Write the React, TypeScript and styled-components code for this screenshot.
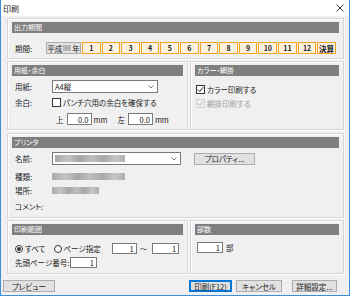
import styled, { createGlobalStyle } from "styled-components";

const GlobalStyle = createGlobalStyle`
  html, body { margin: 0; padding: 0; }
  body {
    font-family: "Noto Sans CJK JP", "Noto Sans", sans-serif;
    font-size: 7.5px;
    color: #1a1a1a;
  }
  * { box-sizing: border-box; }
`;

const Window = styled.div`
  width: 350px;
  height: 296px;
  border: 1px solid #3b8edb;
  border-top: none;
  background: #f0f0f0;
  display: flex;
  flex-direction: column;
  overflow: hidden;
  font-feature-settings: "palt";
`;

const TitleBar = styled.div`
  height: 16px;
  background: #fff;
  display: flex;
  align-items: center;
  justify-content: space-between;
  padding: 0 5px 0 2px;
  font-size: 8px;
`;

const Body = styled.div`
  padding: 2px 5px 0 6px;
  display: flex;
  flex-direction: column;
`;

const Group = styled.div<{ $h: number; $mb?: number; $flex?: boolean }>`
  height: ${(p) => p.$h}px;
  margin-bottom: ${(p) => p.$mb ?? 0}px;
  border: 1px solid #d5d5d5;
  box-shadow: inset 1px 1px 0 #fff, 1px 1px 0 #fff;
  padding: 3px 4px;
  display: flex;
  flex-direction: column;
  ${(p) => (p.$flex ? "flex: 1;" : "")}
`;

const GroupRow = styled.div<{ $h: number; $mb?: number }>`
  display: flex;
  gap: 2px;
  height: ${(p) => p.$h}px;
  margin-bottom: ${(p) => p.$mb ?? 0}px;
  & > div:first-child {
    width: 181px;
    flex: none;
  }
`;

const Header = styled.div`
  height: 11px;
  background: #7f7f7f;
  color: #fff;
  line-height: 11px;
  padding-left: 2px;
  font-size: 7px;
  flex: none;
`;

const Row = styled.div<{ $mt: number; $h: number }>`
  display: flex;
  align-items: center;
  margin-top: ${(p) => p.$mt}px;
  height: ${(p) => p.$h}px;
  flex: none;
`;

const Label = styled.span<{ $w: number }>`
  width: ${(p) => p.$w}px;
  padding-left: 3px;
  flex: none;
  white-space: nowrap;
`;

const Text = styled.span<{ $ml?: number; $dim?: boolean }>`
  margin-left: ${(p) => p.$ml ?? 0}px;
  white-space: nowrap;
  color: ${(p) => (p.$dim ? "#a0a0a0" : "inherit")};
`;

const EraButton = styled.div`
  width: 35px;
  height: 12px;
  background: #e1e1e1;
  border: 1px solid #adadad;
  display: flex;
  align-items: center;
  justify-content: center;
  gap: 1px;
`;

const Masked = styled.span<{ $w: number; $h?: number }>`
  display: inline-block;
  width: ${(p) => p.$w}px;
  height: ${(p) => p.$h ?? 7}px;
  background: linear-gradient(
    90deg,
    #a9a9a9 0%,
    #c4c4c4 18%,
    #a6a6a6 35%,
    #bebebe 52%,
    #a8a8a8 70%,
    #c6c6c6 86%,
    #afafaf 100%
  );
  filter: blur(0.5px);
`;

const Periods = styled.div`
  display: flex;
  gap: 1px;
  width: 254px;
  margin-left: 1px;
  height: 12px;
`;

const PeriodCell = styled.div`
  flex: 1;
  border: 1px solid #f5a21c;
  background: #fff3df;
  display: flex;
  align-items: center;
  justify-content: center;
  font-weight: bold;
  font-size: 7px;
`;

const SettleCell = styled(PeriodCell)`
  background: #fdf3e6;
  font-size: 7.5px;
`;

const Select = styled.div<{ $w: number }>`
  width: ${(p) => p.$w}px;
  height: 13px;
  background: #fff;
  border: 1px solid #7a7a7a;
  display: flex;
  align-items: center;
  justify-content: space-between;
  padding: 0 3px 0 2px;
`;

const Field = styled.div<{ $w: number; $ml?: number; $h?: number }>`
  width: ${(p) => p.$w}px;
  height: ${(p) => p.$h ?? 12}px;
  margin-left: ${(p) => p.$ml ?? 0}px;
  background: #fff;
  border: 1px solid #7a7a7a;
  display: flex;
  align-items: center;
  justify-content: flex-end;
  padding-right: 2px;
  flex: none;
`;

const Check = styled.span<{ $off?: boolean }>`
  width: 9px;
  height: 9px;
  border: 1px solid ${(p) => (p.$off ? "#cfcfcf" : "#333")};
  background: ${(p) => (p.$off ? "#f0f0f0" : "#fff")};
  display: inline-flex;
  align-items: center;
  justify-content: center;
  flex: none;
`;

const Radio = styled.span<{ $on?: boolean; $ml?: number }>`
  width: 8px;
  height: 8px;
  margin-left: ${(p) => p.$ml ?? 0}px;
  border-radius: 50%;
  border: 1px solid #333;
  background: #fff;
  display: inline-flex;
  align-items: center;
  justify-content: center;
  flex: none;
  &::after {
    content: "";
    width: 4px;
    height: 4px;
    border-radius: 50%;
    background: ${(p) => (p.$on ? "#333" : "transparent")};
  }
`;

const Button = styled.div<{ $w: number; $ml?: number; $primary?: boolean }>`
  width: ${(p) => p.$w}px;
  height: 12px;
  margin-left: ${(p) => p.$ml ?? 0}px;
  background: #e1e1e1;
  border: 1px solid ${(p) => (p.$primary ? "#0078d7" : "#adadad")};
  box-shadow: ${(p) => (p.$primary ? "inset 0 0 0 1px #0078d7" : "none")};
  display: flex;
  align-items: center;
  justify-content: center;
  flex: none;
  white-space: nowrap;
`;

const Footer = styled.div`
  display: flex;
  align-items: center;
  margin: 6px 0 0 -4px;
  height: 12px;
`;

const Tick = ({ color }: { color: string }) => (
  <svg width="7" height="7" viewBox="0 0 7 7">
    <polyline points="0.8,3.6 2.7,5.5 6.2,1.2" fill="none" stroke={color} strokeWidth="1" />
  </svg>
);

const Chevron = () => (
  <svg width="6" height="4" viewBox="0 0 6 4">
    <polyline points="0.5,0.5 3,3 5.5,0.5" fill="none" stroke="#555" strokeWidth="0.8" />
  </svg>
);

const months = ["1", "2", "3", "4", "5", "6", "7", "8", "9", "10", "11", "12"];

export default function App() {
  return (
    <>
      <GlobalStyle />
      <Window>
        <TitleBar>
          <span>印刷</span>
          <svg width="8" height="8" viewBox="0 0 8 8">
            <path d="M0.5 0.5 L7.5 7.5 M7.5 0.5 L0.5 7.5" stroke="#222" strokeWidth="0.9" />
          </svg>
        </TitleBar>
        <Body>
          <Group $h={41} $mb={2}>
            <Header>出力期間</Header>
            <Row $mt={9} $h={12}>
              <Label $w={34}>期間:</Label>
              <EraButton>
                平成<Masked $w={8} $h={6} />年
              </EraButton>
              <Periods>
                {months.map((m) => (
                  <PeriodCell key={m}>{m}</PeriodCell>
                ))}
                <SettleCell>決算</SettleCell>
              </Periods>
            </Row>
          </Group>

          <GroupRow $h={69} $mb={3}>
            <Group $h={69}>
              <Header>用紙・余白</Header>
              <Row $mt={4} $h={13}>
                <Label $w={40}>用紙:</Label>
                <Select $w={106}>
                  <span>A4縦</span>
                  <Chevron />
                </Select>
              </Row>
              <Row $mt={4} $h={10}>
                <Label $w={40}>余白:</Label>
                <Check />
                <Text $ml={2}>パンチ穴用の余白を確保する</Text>
              </Row>
              <Row $mt={6} $h={12}>
                <Text $ml={44}>上</Text>
                <Field $w={25} $ml={3}>0.0</Field>
                <Text $ml={2}>mm</Text>
                <Text $ml={10}>左</Text>
                <Field $w={25} $ml={3}>0.0</Field>
                <Text $ml={2}>mm</Text>
              </Row>
            </Group>
            <Group $h={69} $flex>
              <Header>カラー・網掛</Header>
              <Row $mt={9} $h={9}>
                <Text $ml={1} />
                <Check>
                  <Tick color="#222" />
                </Check>
                <Text $ml={2}>カラー印刷する</Text>
              </Row>
              <Row $mt={5} $h={9}>
                <Text $ml={1} />
                <Check $off>
                  <Tick color="#b5b5b5" />
                </Check>
                <Text $ml={2} $dim>
                  網掛印刷する
                </Text>
              </Row>
            </Group>
          </GroupRow>

          <Group $h={85} $mb={2}>
            <Header>プリンタ</Header>
            <Row $mt={4} $h={13}>
              <Label $w={40}>名前:</Label>
              <Select $w={129}>
                <Masked $w={70} />
                <Chevron />
              </Select>
              <Button $w={61} $ml={13}>
                プロパティ...
              </Button>
            </Row>
            <Row $mt={6} $h={10}>
              <Label $w={40}>種類:</Label>
              <Masked $w={73} />
            </Row>
            <Row $mt={4} $h={10}>
              <Label $w={40}>場所:</Label>
              <Masked $w={47} />
            </Row>
            <Row $mt={6} $h={10}>
              <Label $w={40}>コメント:</Label>
            </Row>
          </Group>

          <GroupRow $h={54}>
            <Group $h={54}>
              <Header>印刷範囲</Header>
              <Row $mt={8} $h={11}>
                <Radio $on $ml={3} />
                <Text $ml={2}>すべて</Text>
                <Radio $ml={8} />
                <Text $ml={2}>ページ指定</Text>
                <Field $w={25} $ml={11} $h={11}>
                  1
                </Field>
                <Text $ml={3}>～</Text>
                <Field $w={27} $ml={5} $h={11}>
                  1
                </Field>
              </Row>
              <Row $mt={3} $h={11}>
                <Label $w={58}>先頭ページ番号:</Label>
                <Field $w={27} $h={11}>
                  1
                </Field>
              </Row>
            </Group>
            <Group $h={54} $flex>
              <Header>部数</Header>
              <Row $mt={7} $h={11}>
                <Field $w={26} $ml={2} $h={11}>
                  1
                </Field>
                <Text $ml={3}>部</Text>
              </Row>
            </Group>
          </GroupRow>

          <Footer>
            <Button $w={52}>プレビュー</Button>
            <Button $w={43} $ml={134} $primary>
              印刷(F12)
            </Button>
            <Button $w={46} $ml={4}>
              キャンセル
            </Button>
            <Button $w={45} $ml={10}>
              詳細設定...
            </Button>
          </Footer>
        </Body>
      </Window>
    </>
  );
}
